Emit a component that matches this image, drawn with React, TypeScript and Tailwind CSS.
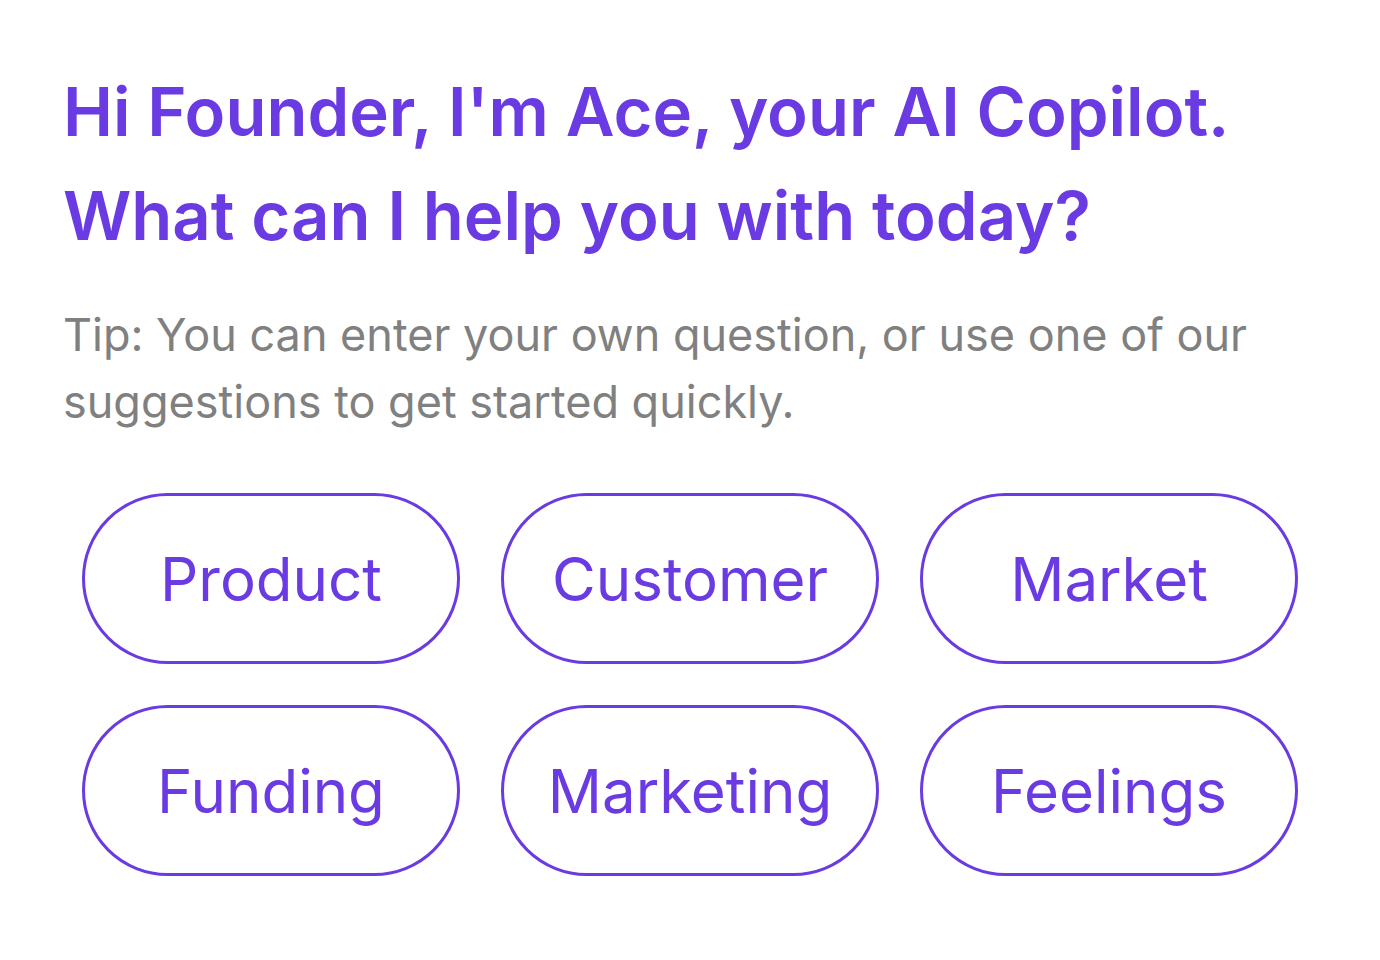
import React from 'react'

const TOPICS = ['Product', 'Customer', 'Market', 'Funding', 'Marketing', 'Feelings']

export default function App() {
    return (
        <div
            className="min-h-screen bg-white px-[63px] pt-[60px]"
            style={{ fontFamily: 'Inter, "Noto Sans", sans-serif' }}
        >
            <h1 className="text-[67px] font-semibold leading-[104px] text-[#6a3be2]">
                Hi Founder, I'm Ace, your AI Copilot.
                <br />
                What can I help you with today?
            </h1>

            <p className="mt-[33px] text-[45px] leading-[67px] text-[#808080]">
                Tip: You can enter your own question, or use one of our suggestions to get started quickly.
            </p>

            <div className="mt-[58px] mx-[19px] grid grid-cols-3 gap-x-[41px] gap-y-[41px]">
                {TOPICS.map((t) => (
                    <button
                        key={t}
                        className="h-[171px] rounded-full border-[3px] border-[#6a3be2] text-[60px] text-[#6a3be2] bg-white"
                    >
                        {t}
                    </button>
                ))}
            </div>
        </div>
    )
}
